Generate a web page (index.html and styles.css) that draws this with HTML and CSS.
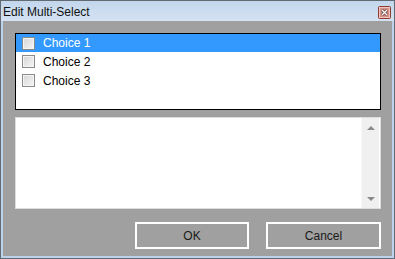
FILE: index.html
```html
<!DOCTYPE html>
<html lang="en">
<head>
<meta charset="UTF-8">
<title>Edit Multi-Select</title>
<link rel="stylesheet" href="styles.css">
</head>
<body>
<div class="window">
	<div class="titlebar">
		<span class="title">Edit Multi-Select</span>
		<span class="close">
			<svg width="13" height="13" viewBox="0 0 13 13">
				<rect x="0.5" y="0.5" width="12" height="12" rx="1" fill="#d4918a" stroke="#8e3a2e"/>
				<rect x="1.5" y="1.5" width="10" height="10" fill="none" stroke="#eec6bf"/>
				<path d="M4 4 L9 9 M9 4 L4 9" stroke="#5a2a24" stroke-width="2.6"/>
				<path d="M4 4 L9 9 M9 4 L4 9" stroke="#ffffff" stroke-width="1.4"/>
			</svg>
		</span>
	</div>
	<div class="client">
		<ul class="listbox">
			<li class="selected"><span class="check"></span>Choice 1</li>
			<li><span class="check"></span>Choice 2</li>
			<li><span class="check"></span>Choice 3</li>
		</ul>
		<div class="memo">
			<div class="memo-text"></div>
			<div class="scrollbar">
				<span class="arrow up"></span>
				<span class="arrow down"></span>
			</div>
		</div>
		<div class="buttons">
			<button class="btn ok">OK</button>
			<button class="btn cancel">Cancel</button>
		</div>
	</div>
</div>
</body>
</html>
```

FILE: styles.css
```css
body{
	margin: 0;
	font-family: "Liberation Sans", Arial, sans-serif;
	font-size: 12px;
}
.window{
	width: 395px;
	height: 259px;
	box-sizing: border-box;
	border: 1px solid #646a72;
	background: #bcd2ea;
	display: flex;
	flex-direction: column;
}
.titlebar{
	height: 20px;
	background: linear-gradient(#c2d6ec, #d5e3f2);
	display: flex;
	align-items: center;
	justify-content: space-between;
	padding: 0 3px 0 2px;
}
.title{
	color: #111;
	font-size: 12px;
	padding-top: 1px;
}
.close{
	display: flex;
	margin-top: 2px;
}
.client{
	flex: 1;
	margin: 0 2px 2px 2px;
	background: #a0a0a0;
	padding: 12px 11px 0 12px;
	display: flex;
	flex-direction: column;
}
.listbox{
	margin: 0;
	padding: 0;
	list-style: none;
	height: 77px;
	box-sizing: border-box;
	border: 1px solid #000;
	background: #fff;
}
.listbox li{
	height: 19px;
	display: flex;
	align-items: center;
	padding-left: 6px;
	color: #000;
}
.listbox li.selected{
	background: #3399ff;
	color: #fff;
	height: 18px;
}
.check{
	width: 13px;
	height: 13px;
	box-sizing: border-box;
	border: 1px solid #8a8b8b;
	background: linear-gradient(135deg, #d6d6d6, #f6f6f6);
	box-shadow: inset 0 0 0 1px #f4f4f4;
	margin-right: 8px;
}
.memo{
	margin-top: 7px;
	height: 92px;
	box-sizing: border-box;
	border: 1px solid #dcdcdc;
	background: #fff;
	display: flex;
}
.memo-text{
	flex: 1;
}
.scrollbar{
	width: 17px;
	background: #f0f0f0;
	border-left: 1px solid #f8f8f8;
	margin-right: 1px;
	display: flex;
	flex-direction: column;
	justify-content: space-between;
	align-items: center;
	padding: 8px 0 7px;
}
.arrow{
	width: 0;
	height: 0;
	border-left: 4px solid transparent;
	border-right: 4px solid transparent;
}
.arrow.up{
	border-bottom: 4px solid #8a8a8a;
}
.arrow.down{
	border-top: 4px solid #8a8a8a;
}
.buttons{
	margin-top: 13px;
	display: flex;
	justify-content: flex-end;
	gap: 17px;
}
.btn{
	height: 27px;
	box-sizing: border-box;
	border: 2px solid #fff;
	background: #a0a0a0;
	font-family: "Liberation Sans", Arial, sans-serif;
	font-size: 12px;
	color: #1a1a1a;
	padding: 0;
}
.btn.ok{
	width: 114px;
}
.btn.cancel{
	width: 115px;
}
```
